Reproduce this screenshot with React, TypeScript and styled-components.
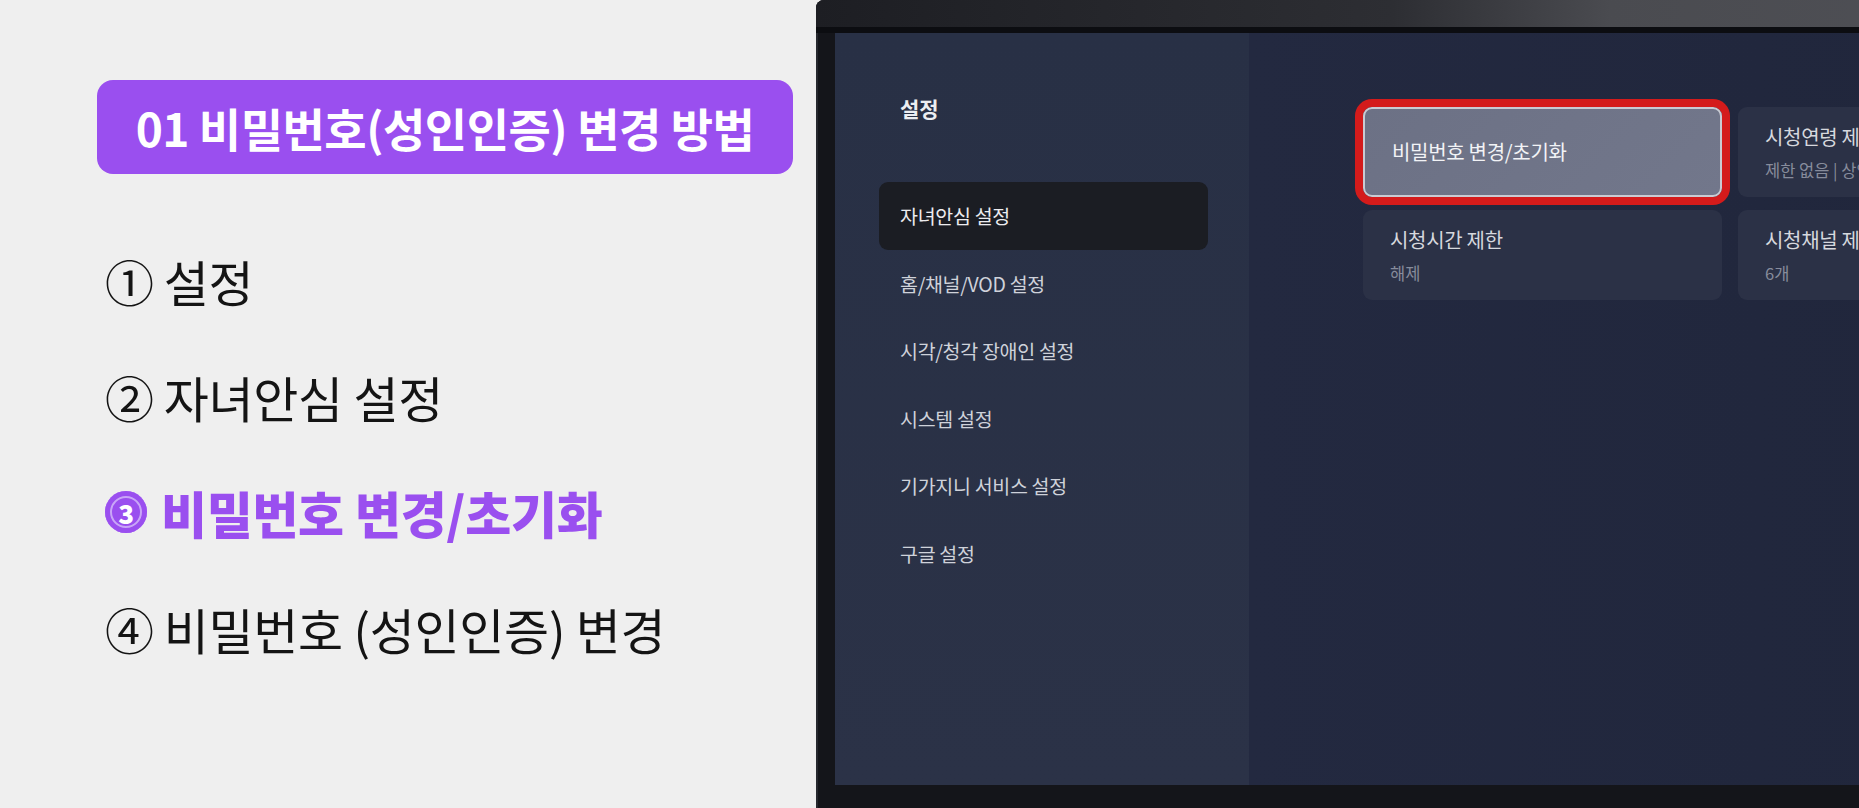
import React from "react";
import styled, { createGlobalStyle } from "styled-components";

const GlobalStyle = createGlobalStyle`
  html, body {
    margin: 0;
    padding: 0;
    background: #efefef;
  }
  body {
    font-family: "Noto Sans CJK KR", "Noto Sans", sans-serif;
  }
`;

const Page = styled.div`
  display: flex;
  width: 1859px;
  height: 808px;
  overflow: hidden;
`;

// 왼쪽 안내 패널
const Guide = styled.section`
  width: 816px;
  flex-shrink: 0;
  background: #efefef;
  padding: 80px 0 0 97px;
  box-sizing: border-box;
`;

const TitleBox = styled.h1`
  margin: 0;
  width: 696px;
  height: 94px;
  border-radius: 16px;
  background: #9a4fef;
  color: #fff;
  display: flex;
  align-items: center;
  justify-content: center;
  font-size: 46px;
  font-weight: 700;
  letter-spacing: -0.5px;
`;

const Steps = styled.ol`
  list-style: none;
  margin: 76px 0 0;
  padding: 0 0 0 8px;
  display: flex;
  flex-direction: column;
  gap: 56px;
`;

const Step = styled.li<{ $active?: boolean }>`
  display: flex;
  align-items: center;
  height: 60px;
  font-size: ${(p) => (p.$active ? "50px" : "49px")};
  font-weight: ${(p) => (p.$active ? 800 : 400)};
  color: ${(p) => (p.$active ? "#9a4fef" : "#141414")};
  letter-spacing: -0.3px;
  white-space: nowrap;
`;

const Num = styled.span`
  margin-right: 10px;
`;

const Badge = styled.span`
  width: 42px;
  height: 42px;
  border-radius: 50%;
  background: #9a4fef;
  color: #fff;
  font-size: 26px;
  font-weight: 800;
  display: inline-flex;
  align-items: center;
  justify-content: center;
  margin-right: 14px;
  box-shadow: inset 0 0 0 5px #9a4fef, inset 0 0 0 7px #c9a6f7;
`;

// TV 화면
const Bezel = styled.div`
  flex: 1;
  display: flex;
  flex-direction: column;
  background: #14151a;
  border-radius: 8px 0 0 0;
  padding-bottom: 23px;
  box-shadow: inset 2px 0 0 #26282e;
`;

const TopRim = styled.div`
  height: 27px;
  border-radius: 8px 0 0 0;
  background: linear-gradient(90deg, #1d1e23 0%, #2d2e33 45%, #4a4b50 62%, #505157 100%);
`;

const ScreenRow = styled.div`
  flex: 1;
  display: flex;
  padding-left: 19px;
  border-top: 6px solid #0c0d11;
`;

const Screen = styled.div`
  flex: 1;
  display: flex;
`;

const Sidebar = styled.nav`
  width: 414px;
  flex-shrink: 0;
  background: linear-gradient(180deg, #283045 0%, #2b3247 100%);
  padding-top: 60px;
  box-sizing: border-box;
`;

const SideTitle = styled.div`
  height: 30px;
  line-height: 30px;
  padding-left: 65px;
  color: #eceef2;
  font-size: 21px;
  font-weight: 700;
  margin-bottom: 59px;
`;

const Menu = styled.ul`
  list-style: none;
  margin: 0;
  padding: 0 0 0 44px;
`;

const MenuItem = styled.li<{ $selected?: boolean }>`
  width: 329px;
  height: 67.5px;
  display: flex;
  align-items: center;
  padding-left: 21px;
  box-sizing: border-box;
  border-radius: 9px;
  background: ${(p) => (p.$selected ? "#1b1d23" : "transparent")};
  color: ${(p) => (p.$selected ? "#ececef" : "#cfd2da")};
  font-size: 19.5px;
  letter-spacing: -0.3px;
`;

const Content = styled.main`
  flex: 1;
  background: linear-gradient(90deg, #232940 0%, #21273d 60%, #20263b 100%);
  padding: 74px 0 0 114px;
  box-sizing: border-box;
  overflow: hidden;
`;

const CardGrid = styled.div`
  display: grid;
  grid-template-columns: 359px 359px;
  grid-auto-rows: 90px;
  column-gap: 16px;
  row-gap: 13px;
`;

const Card = styled.div<{ $focused?: boolean }>`
  border-radius: 9px;
  box-sizing: border-box;
  padding-left: 27px;
  display: flex;
  flex-direction: column;
  justify-content: center;
  gap: 10px;
  white-space: nowrap;
  background: ${(p) =>
    p.$focused ? "linear-gradient(135deg, #6c7185 0%, #72778b 100%)" : "#2b3146"};
  border: ${(p) => (p.$focused ? "2px solid #c9cbd3" : "none")};
  box-shadow: ${(p) => (p.$focused ? "0 0 0 8px #d41b1b" : "none")};
  overflow: ${(p) => (p.$focused ? "visible" : "hidden")};
`;

const CardTitle = styled.div<{ $focused?: boolean }>`
  font-size: 20px;
  line-height: 26px;
  color: ${(p) => (p.$focused ? "#f2f3f6" : "#d6d8de")};
  letter-spacing: -0.3px;
`;

const CardSub = styled.div`
  font-size: 16.5px;
  line-height: 20px;
  color: #878c9c;
`;

const steps = [
  { num: "①", label: "설정" },
  { num: "②", label: "자녀안심 설정" },
  { num: "3", label: "비밀번호 변경/초기화", active: true },
  { num: "④", label: "비밀번호 (성인인증) 변경" },
];

const menu = [
  "자녀안심 설정",
  "홈/채널/VOD 설정",
  "시각/청각 장애인 설정",
  "시스템 설정",
  "기가지니 서비스 설정",
  "구글 설정",
];

const cards = [
  { title: "비밀번호 변경/초기화", focused: true },
  { title: "시청연령 제한", sub: "제한 없음 | 상영등급" },
  { title: "시청시간 제한", sub: "해제" },
  { title: "시청채널 제한", sub: "6개" },
];

export default function App() {
  return (
    <>
      <GlobalStyle />
      <Page>
        <Guide>
          <TitleBox>01 비밀번호(성인인증) 변경 방법</TitleBox>
          <Steps>
            {steps.map((s) => (
              <Step key={s.label} $active={s.active}>
                {s.active ? <Badge>{s.num}</Badge> : <Num>{s.num}</Num>}
                {s.label}
              </Step>
            ))}
          </Steps>
        </Guide>
        <Bezel>
          <TopRim />
          <ScreenRow>
            <Screen>
              <Sidebar>
                <SideTitle>설정</SideTitle>
                <Menu>
                  {menu.map((m, i) => (
                    <MenuItem key={m} $selected={i === 0}>
                      {m}
                    </MenuItem>
                  ))}
                </Menu>
              </Sidebar>
              <Content>
                <CardGrid>
                  {cards.map((c) => (
                    <Card key={c.title} $focused={c.focused}>
                      <CardTitle $focused={c.focused}>{c.title}</CardTitle>
                      {c.sub && <CardSub>{c.sub}</CardSub>}
                    </Card>
                  ))}
                </CardGrid>
              </Content>
            </Screen>
          </ScreenRow>
        </Bezel>
      </Page>
    </>
  );
}
